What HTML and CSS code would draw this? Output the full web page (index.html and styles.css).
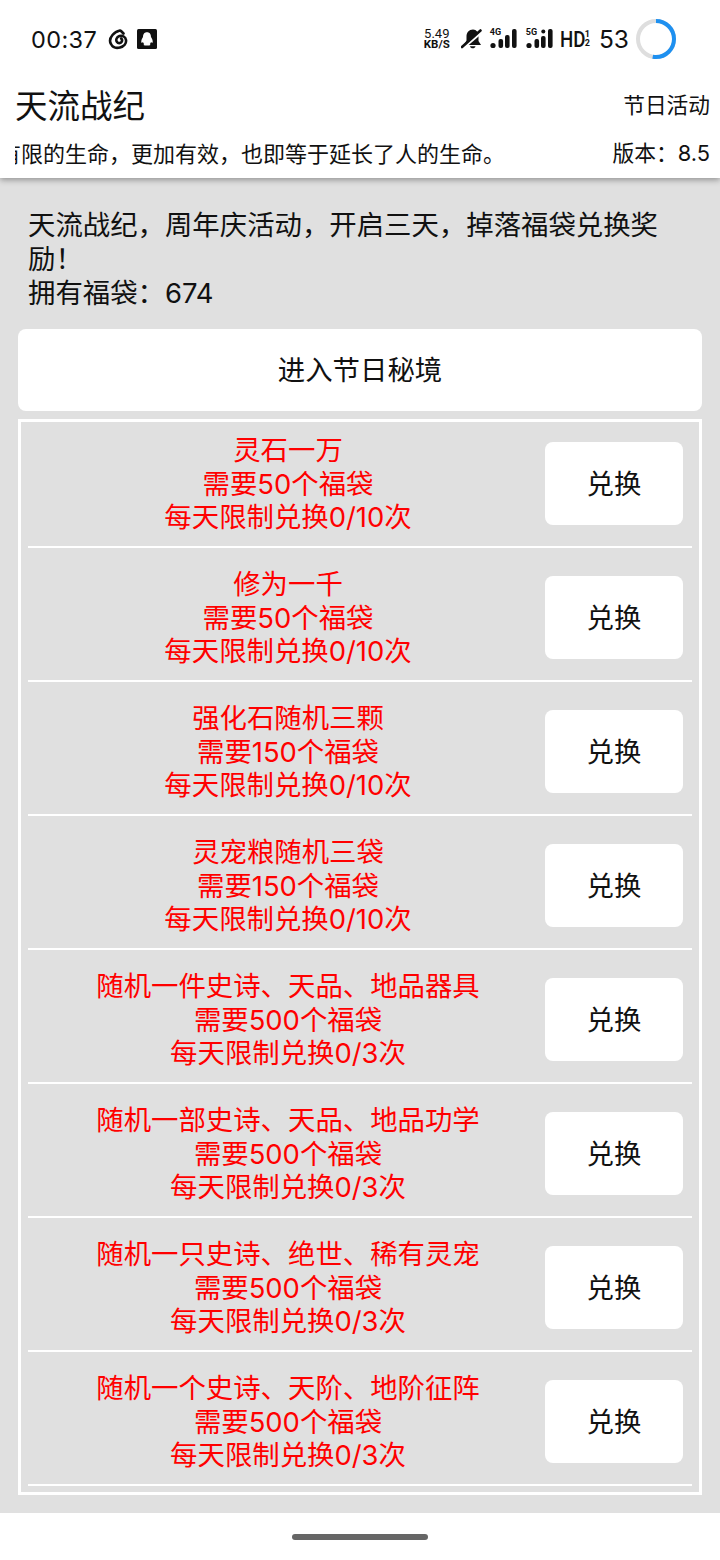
FILE: index.html
```html
<!DOCTYPE html>
<html lang="zh-CN">
<head>
    <meta charset="UTF-8">
    <meta name="viewport" content="width=device-width, initial-scale=1.0">
    <title>天流战纪</title>
    <link rel="stylesheet" href="styles.css">
</head>
<body>
    <div class="status-bar">
        <div class="status-left">
            <span class="time">00:37</span>
            <svg class="icon-swirl" width="22" height="22" viewBox="0 0 22 22">
                <path d="M13 2.5 C10.5 3 7.5 4.5 5.5 7 C3 10 2.5 13.5 4 16 C5.5 19 9 20.5 13 19.5 C17 18.5 19.5 15.5 19 12 C18.5 9 15.5 7 12.5 8 C9.5 9 8.5 12 10 14 C11 15.5 13.5 15.5 14.5 14 C15.2 13 15.2 11.5 14.2 10.5 M14 3 L16.5 5.5" fill="none" stroke="#111" stroke-width="2.6" stroke-linecap="round"/>
            </svg>
            <svg class="icon-qq" width="20" height="20" viewBox="0 0 20 20">
                <rect width="20" height="20" rx="1.5" fill="#111"/>
                <path d="M10 3.2 C7 3.2 6 5.5 6 8 C5 9.5 4 11.5 4.3 13.5 C5 14 5.6 13.4 6 13 C6.3 14 6.6 14.6 7.2 15 C6.3 15.5 6.4 16.5 8 16.5 L12 16.5 C13.6 16.5 13.7 15.5 12.8 15 C13.4 14.6 13.7 14 14 13 C14.4 13.4 15 14 15.7 13.5 C16 11.5 15 9.5 14 8 C14 5.5 13 3.2 10 3.2 Z" fill="#fff"/>
            </svg>
        </div>
        <div class="status-right">
            <div class="speed"><span>5.49</span><span class="speed-unit">KB/S</span></div>
            <svg class="icon-bell" width="22" height="22" viewBox="0 0 22 22">
                <path d="M12 1.5 C8 1.5 5.5 4.5 5.5 8.5 L5.5 12.5 L3 17 L20 17 L17.5 13 L17.5 8.5 C17.5 4.5 15.5 1.5 12 1.5 Z M9 18.3 C9.5 21 14 21 14.5 18.3 Z" fill="#111"/>
                <path d="M3.5 18.5 L21 3.5" stroke="#fff" stroke-width="3"/>
                <path d="M1 19 L19.5 2.5" stroke="#111" stroke-width="2.6" stroke-linecap="round"/>
            </svg>
            <div class="signal">
                <span class="signal-label">4G</span>
                <svg width="27" height="20" viewBox="0 0 27 20">
                    <circle cx="3" cy="16.5" r="2.6" fill="#111"/>
                    <rect x="8.5" y="10" width="4.6" height="9" rx="2" fill="#111"/>
                    <rect x="15" y="6" width="4.6" height="13" rx="2" fill="#111"/>
                    <rect x="22" y="0" width="4.6" height="19" rx="2" fill="#111"/>
                </svg>
            </div>
            <div class="signal">
                <span class="signal-label">5G</span>
                <svg width="27" height="20" viewBox="0 0 27 20">
                    <circle cx="3" cy="16.5" r="2.6" fill="#111"/>
                    <rect x="8.5" y="10" width="4.6" height="9" rx="2" fill="#111"/>
                    <rect x="15" y="7" width="4.6" height="12" rx="2" fill="#111"/>
                    <circle cx="17.3" cy="2.5" r="2" fill="#111"/>
                    <rect x="22" y="0" width="4.6" height="19" rx="2" fill="#111"/>
                </svg>
            </div>
            <div class="hd"><span class="hd-text">HD</span><span class="hd-frac"><span>1</span><span>2</span></span></div>
            <span class="battery-num">53</span>
            <svg class="battery-ring" width="42" height="42" viewBox="0 0 42 42">
                <circle cx="21" cy="21" r="18" fill="none" stroke="#dedede" stroke-width="4"/>
                <circle cx="21" cy="21" r="18" fill="none" stroke="#1e90f0" stroke-width="4" pathLength="100" stroke-dasharray="53 47" transform="rotate(-90 21 21)"/>
            </svg>
        </div>
    </div>

    <header class="app-header">
        <div class="header-row">
            <h1 class="app-title">天流战纪</h1>
            <span class="header-link">节日活动</span>
        </div>
        <div class="header-row sub-row">
            <div class="marquee"><span class="marquee-text">有限的生命，更加有效，也即等于延长了人的生命。</span></div>
            <span class="version">版本：8.5</span>
        </div>
    </header>

    <main class="content">
        <p class="intro">天流战纪，周年庆活动，开启三天，掉落福袋兑换奖励！<br>拥有福袋：674</p>
        <button class="enter-btn">进入节日秘境</button>

        <div class="reward-list">
            <div class="reward-row">
                <div class="reward-text">灵石一万<br>需要50个福袋<br>每天限制兑换0/10次</div>
                <button class="swap-btn">兑换</button>
            </div>
            <div class="reward-row">
                <div class="reward-text">修为一千<br>需要50个福袋<br>每天限制兑换0/10次</div>
                <button class="swap-btn">兑换</button>
            </div>
            <div class="reward-row">
                <div class="reward-text">强化石随机三颗<br>需要150个福袋<br>每天限制兑换0/10次</div>
                <button class="swap-btn">兑换</button>
            </div>
            <div class="reward-row">
                <div class="reward-text">灵宠粮随机三袋<br>需要150个福袋<br>每天限制兑换0/10次</div>
                <button class="swap-btn">兑换</button>
            </div>
            <div class="reward-row">
                <div class="reward-text">随机一件史诗、天品、地品器具<br>需要500个福袋<br>每天限制兑换0/3次</div>
                <button class="swap-btn">兑换</button>
            </div>
            <div class="reward-row">
                <div class="reward-text">随机一部史诗、天品、地品功学<br>需要500个福袋<br>每天限制兑换0/3次</div>
                <button class="swap-btn">兑换</button>
            </div>
            <div class="reward-row">
                <div class="reward-text">随机一只史诗、绝世、稀有灵宠<br>需要500个福袋<br>每天限制兑换0/3次</div>
                <button class="swap-btn">兑换</button>
            </div>
            <div class="reward-row">
                <div class="reward-text">随机一个史诗、天阶、地阶征阵<br>需要500个福袋<br>每天限制兑换0/3次</div>
                <button class="swap-btn">兑换</button>
            </div>
        </div>
    </main>

    <footer class="nav-bar">
        <div class="home-pill"></div>
    </footer>
</body>
</html>
```

FILE: styles.css
```css
* {
    box-sizing: border-box;
}
body {
    font-family: Inter, "Noto Sans CJK SC", sans-serif;
    margin: 0;
    padding: 0;
    width: 720px;
    height: 1560px;
    display: flex;
    flex-direction: column;
    background-color: #fff;
    color: #111;
    overflow: hidden;
}

/* status bar */
.status-bar {
    height: 75px;
    padding: 0 43px 0 31px;
    display: flex;
    justify-content: space-between;
    align-items: center;
    flex-shrink: 0;
}
.status-left {
    display: flex;
    align-items: center;
    margin-top: 3px;
}
.time {
    font-family: Inter, Roboto, sans-serif;
    font-size: 23.5px;
    letter-spacing: 0.4px;
    margin-right: 10px;
}
.icon-qq {
    margin-left: 8px;
}
.status-right {
    display: flex;
    align-items: center;
    margin-top: 3px;
}
.speed {
    display: flex;
    flex-direction: column;
    align-items: center;
    font-family: Roboto, sans-serif;
    font-size: 13px;
    line-height: 11px;
    width: 30px;
    margin-right: 9px;
}
.speed-unit {
    font-weight: 700;
    font-size: 11.5px;
}
.icon-bell {
    margin-right: 7px;
}
.signal {
    position: relative;
    width: 27px;
    height: 20px;
    margin-right: 9px;
}
.signal + .signal {
    margin-right: 7px;
}
.signal svg {
    display: block;
}
.signal-label {
    position: absolute;
    left: 0;
    top: -2px;
    font-family: Roboto, sans-serif;
    font-size: 9px;
    font-weight: 700;
    line-height: 10px;
}
.hd {
    display: flex;
    align-items: center;
    margin-right: 9px;
}
.hd-text {
    font-family: Roboto, sans-serif;
    font-size: 22px;
    font-weight: 500;
    transform: scaleX(0.85);
    transform-origin: left center;
    width: 25px;
}
.hd-frac {
    display: flex;
    flex-direction: column;
    font-family: Roboto, sans-serif;
    font-size: 9px;
    font-weight: 700;
    line-height: 9px;
}
.battery-num {
    font-family: Inter, Roboto, sans-serif;
    font-size: 24.5px;
    margin-right: 6px;
}
.battery-ring {
    display: block;
}

/* header */
.app-header {
    height: 103px;
    flex-shrink: 0;
    padding: 0 10px 0 15px;
    background-color: #fff;
    box-shadow: 0 2px 6px rgba(0, 0, 0, 0.35);
    clip-path: inset(0 0 -14px 0);
    position: relative;
}
.header-row {
    display: flex;
    justify-content: space-between;
    align-items: center;
    height: 61px;
    padding-bottom: 4px;
}
.sub-row {
    height: 35px;
    padding-bottom: 2px;
    margin-top: -1px;
    margin-left: -1px;
}
.app-title {
    font-size: 32.5px;
    font-weight: 400;
    margin: 0;
}
.header-link {
    font-size: 21.7px;
}
.marquee {
    width: 580px;
    margin-left: 1px;
    overflow: hidden;
    white-space: nowrap;
    font-size: 22px;
}
.marquee-text {
    display: inline-block;
    margin-left: -16px;
}
.version {
    font-size: 21.8px;
}

/* main area */
.content {
    flex: 1;
    background-color: #e0e0e0;
    padding: 30px 18px 0;
}
.intro {
    margin: 0 10px 19px;
    font-size: 27.4px;
    line-height: 34px;
}
.enter-btn {
    display: block;
    width: 100%;
    height: 82px;
    padding-bottom: 6px;
    background-color: #fff;
    color: #111;
    border: none;
    border-radius: 8px;
    font-family: inherit;
    font-size: 27.4px;
}
.reward-list {
    margin-top: 8px;
    padding: 0 7px 6px;
    border: 3px solid #fff;
}
.reward-row {
    display: flex;
    align-items: center;
    padding: 19px 9px 11.5px 0;
    border-bottom: 2px solid #fff;
}
.reward-row:first-child {
    padding-top: 11px;
}
.reward-text {
    flex: 1;
    padding-top: 1px;
    text-align: center;
    color: #f00;
    font-size: 27.4px;
    line-height: 33.5px;
}
.swap-btn {
    width: 138px;
    height: 83px;
    padding-bottom: 5px;
    flex-shrink: 0;
    background-color: #fff;
    color: #111;
    border: none;
    border-radius: 8px;
    font-family: inherit;
    font-size: 27.4px;
    margin-left: -3px;
}

/* bottom nav */
.nav-bar {
    height: 47px;
    flex-shrink: 0;
    background-color: #fff;
    display: flex;
    justify-content: center;
    padding-top: 21px;
}
.home-pill {
    width: 136px;
    height: 6px;
    border-radius: 3px;
    background-color: #666;
}
```
